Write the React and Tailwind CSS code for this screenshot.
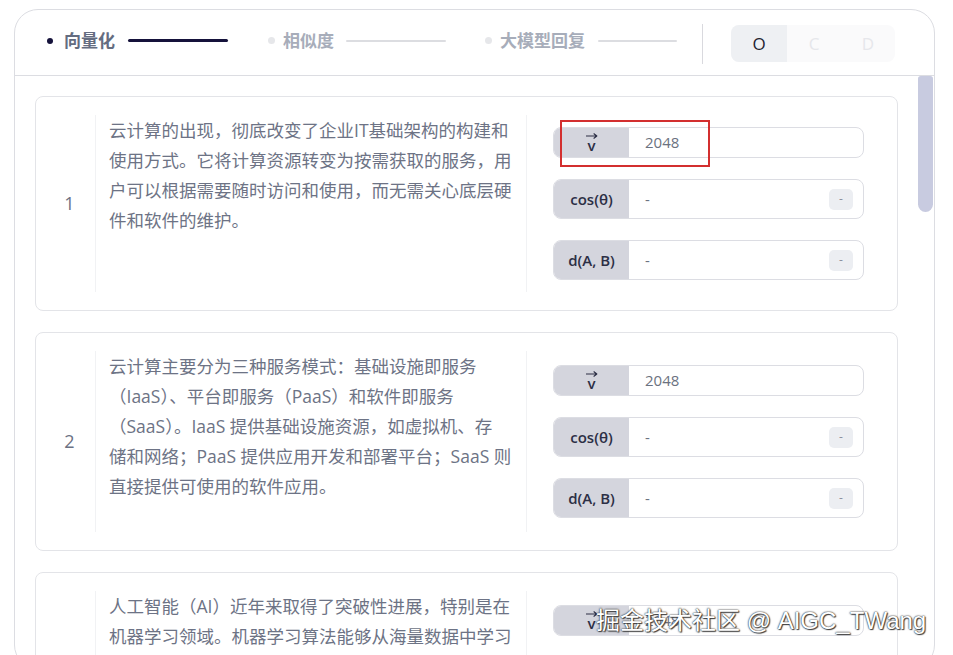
import React from "react";

const FONT = { fontFamily: '"Open Sans", "Noto Sans CJK SC", sans-serif' };

function VecLabel() {
  return (
    <span className="relative inline-flex flex-col items-center leading-none">
      <svg width="12" height="6" viewBox="0 0 12 6" className="mb-[1px]">
        <path d="M0.5 3 H10.5 M8 0.8 L10.8 3 L8 5.2" stroke="#2c2f45" strokeWidth="1.2" fill="none" strokeLinecap="round" strokeLinejoin="round" />
      </svg>
      <span className="text-[15px] font-semibold -mt-[2px]">v</span>
    </span>
  );
}

function Row({ label, value, badge, short }) {
  return (
    <div className={`flex items-stretch rounded-[8px] border border-[#dcdde3] overflow-hidden bg-white ${short ? "h-[31px]" : "h-[40px]"}`}>
      <div className="w-[75px] shrink-0 bg-[#d4d5dd] flex items-center justify-center text-[15px] font-semibold text-[#2c2f45]">
        {label}
      </div>
      <div className="flex-1 flex items-center pl-[16px] pr-[10px] text-[15px] text-[#6b7280]">
        <span className="flex-1">{value}</span>
        {badge && (
          <span className="w-[24px] h-[21px] rounded-[5px] bg-[#eceef2] flex items-center justify-center text-[12px] text-[#8b909c]">-</span>
        )}
      </div>
    </div>
  );
}

function Card({ n, lines, height, highlight }) {
  return (
    <div className={`shrink-0 flex items-center rounded-[8px] border border-[#e3e4e8] bg-white ${height}`}>
      <div className="w-[59px] shrink-0 pl-2 text-center text-[18px] text-[#6b7183]">{n}</div>
      <div className="w-[432px] shrink-0 self-stretch my-[18px] border-l border-r border-[#f1f2f4] pl-[13px] text-[17.5px] leading-[30px] text-[#6d7385]">
        {lines.map((l, i) => (
          <div key={i} className="whitespace-nowrap">{l}</div>
        ))}
      </div>
      <div className="relative ml-[26px] w-[311px] shrink-0 flex flex-col gap-[21px]">
        <Row label={<VecLabel />} value="2048" short />
        <Row label="cos(θ)" value="-" badge />
        <Row label="d(A, B)" value="-" badge />
        {highlight && (
          <div className="absolute left-[7px] top-[-7px] w-[150px] h-[47px] border-2 border-[#d32f2f]" />
        )}
      </div>
    </div>
  );
}

export default function App() {
  return (
    <div className="relative w-[953px] h-[655px] bg-white overflow-hidden" style={FONT}>
      <div className="ml-[14px] mt-[9px] w-[921px] h-[660px] border border-[#dcdde2] rounded-[24px] flex flex-col overflow-hidden">
        {/* header */}
        <div className="h-[66px] shrink-0 flex items-center pl-[32px] border-b border-[#dcdde2]">
          <div className="flex items-center mb-[4px]">
            <span className="w-[6px] h-[6px] rounded-full bg-[#15123b]" />
            <span className="ml-[11px] text-[17px] font-bold text-[#646c80]">向量化</span>
            <span className="ml-[13px] w-[100px] h-[3px] rounded-full bg-[#15123b]" />

            <span className="ml-[40px] w-[7px] h-[7px] rounded-full bg-[#e6e7ea]" />
            <span className="ml-[8px] text-[17px] font-bold text-[#a7adba]">相似度</span>
            <span className="ml-[12px] w-[100px] h-[2px] rounded-full bg-[#dcdde1]" />

            <span className="ml-[39px] w-[7px] h-[7px] rounded-full bg-[#e6e7ea]" />
            <span className="ml-[8px] text-[17px] font-bold text-[#a7adba]">大模型回复</span>
            <span className="ml-[13px] w-[79px] h-[2px] rounded-full bg-[#dcdde1]" />
          </div>

          <span className="ml-[25px] mt-[2px] w-px h-[40px] bg-[#d9d9de]" />

          <div className="ml-[28px] mt-[2px] w-[164px] h-[37px] rounded-[8px] bg-[#fafafb] flex items-stretch text-[17px]">
            <div className="w-[56px] rounded-l-[8px] bg-[#eef0f3] flex items-center justify-center text-[#1f2330]">O</div>
            <div className="flex-1 flex items-center justify-center text-[#e6e7eb]">C</div>
            <div className="flex-1 flex items-center justify-center text-[#e6e7eb]">D</div>
          </div>
        </div>

        {/* body */}
        <div className="flex-1 flex min-h-0">
          <div className="flex-1 flex flex-col gap-[21px] pt-[20px] px-[20px] overflow-hidden">
            <Card
              n="1"
              height="h-[215px]"
              highlight
              lines={[
                "云计算的出现，彻底改变了企业IT基础架构的构建和",
                "使用方式。它将计算资源转变为按需获取的服务，用",
                "户可以根据需要随时访问和使用，而无需关心底层硬",
                "件和软件的维护。",
              ]}
            />
            <Card
              n="2"
              height="h-[219px]"
              lines={[
                "云计算主要分为三种服务模式：基础设施即服务",
                "（IaaS）、平台即服务（PaaS）和软件即服务",
                "（SaaS）。IaaS 提供基础设施资源，如虚拟机、存",
                "储和网络；PaaS 提供应用开发和部署平台；SaaS 则",
                "直接提供可使用的软件应用。",
              ]}
            />
            <Card
              n="3"
              height="h-[219px]"
              lines={[
                "人工智能（AI）近年来取得了突破性进展，特别是在",
                "机器学习领域。机器学习算法能够从海量数据中学习",
                "规律，并据此做出预测和决策。",
              ]}
            />
          </div>
          <div className="w-[16px] shrink-0">
            <div className="w-[15px] h-[136px] rounded-b-[8px] rounded-t-[3px] bg-[#c8cbe0]" />
          </div>
        </div>
      </div>

      {/* watermark */}
      <div
        className="absolute left-[596px] top-[605px] whitespace-nowrap text-[24px] leading-[32px] text-white"
        style={{ fontFamily: '"Liberation Sans", "Noto Sans CJK SC", sans-serif', textShadow: "0 0 1px #333, 0 0 2px #333, 1px 1px 1px #444" }}
      >
        掘金技术社区 @ AIGC_TWang
      </div>
    </div>
  );
}
